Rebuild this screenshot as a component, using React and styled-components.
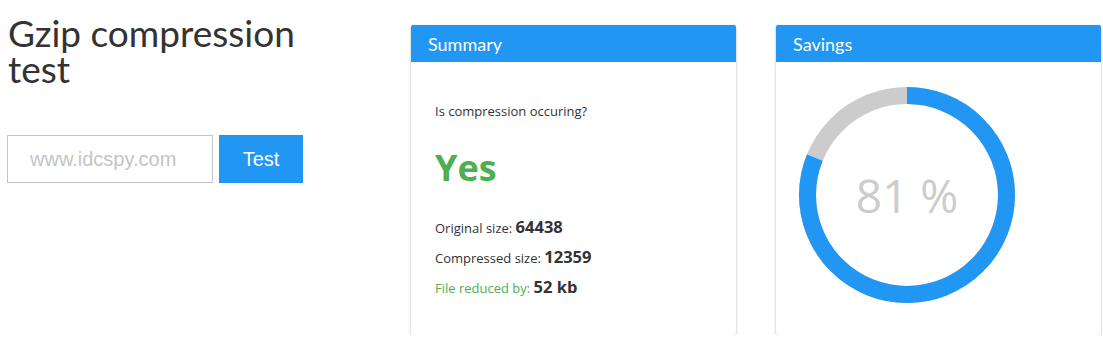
import styled, { createGlobalStyle } from 'styled-components'

const GlobalStyle = createGlobalStyle`
body {
  margin: 0;
  background: #ffffff;
  font-family: "Open Sans", "Liberation Sans", sans-serif;
  color: #333333;
}
`

const Page = styled.div`
display: grid;
grid-template-columns: 364px 325px 325px;
column-gap: 40px;
padding: 25px 0 0 7px;
align-items: start;
`

const Intro = styled.div`
display: flex;
flex-direction: column;
`

const Heading = styled.h1`
max-width: 320px;
margin: -10px 0 0 1px;
font-family: Lato, "Liberation Sans", sans-serif;
font-weight: 400;
font-size: 37px;
line-height: 36px;
color: #333333;
`

const Form = styled.form`
display: flex;
gap: 6px;
margin-top: 48px;
`

const UrlInput = styled.input`
box-sizing: border-box;
width: 206px;
height: 48px;
padding: 0 22px;
border: 1px solid #c4c4c4;
border-radius: 0;
font-family: "Liberation Sans", Arial, sans-serif;
font-size: 20px;
color: #333333;
outline: none;
&::placeholder {
  color: #c4c4c4;
}
`

const TestButton = styled.button`
width: 84px;
height: 48px;
border: none;
background: #2196f3;
color: #ffffff;
font-family: "Liberation Sans", Arial, sans-serif;
font-size: 20px;
cursor: pointer;
`

const Card = styled.section`
height: 310px;
background: #ffffff;
border-radius: 2px;
box-shadow: 0 1px 3px rgba(0, 0, 0, 0.28);
overflow: hidden;
display: flex;
flex-direction: column;
`

const CardHeader = styled.header`
height: 37px;
padding-left: 17px;
display: flex;
align-items: center;
background: #2196f3;
color: #ffffff;
font-family: Lato, "Liberation Sans", sans-serif;
font-size: 18px;
`

const SummaryBody = styled.div`
padding: 40px 24px 0;
`

const Question = styled.p`
margin: 0;
font-size: 13px;
line-height: 18px;
color: #333333;
`

const Answer = styled.div`
margin: 23px 0 20px;
font-size: 36px;
font-weight: 700;
line-height: 50px;
color: #4caf50;
`

const StatRow = styled.div`
height: 30px;
font-size: 13px;
line-height: 30px;
color: ${p => (p.$highlight ? '#4caf50' : '#333333')};
`

const StatValue = styled.strong`
font-size: 16.5px;
font-weight: 700;
line-height: 1;
color: #333333;
`

const SavingsBody = styled.div`
padding: 25px 24px 0 23px;
`

const Gauge = styled.div`
display: grid;
width: 216px;
height: 216px;
& > * {
  grid-area: 1 / 1;
}
`

const GaugeLabel = styled.div`
place-self: center;
font-size: 46px;
font-weight: 400;
color: #cccccc;
line-height: 1;
`

const Donut = ({ percent }) => {
  const r = 99.5
  const c = 2 * Math.PI * r
  return (
    <svg width="216" height="216" viewBox="0 0 216 216">
      <circle cx="108" cy="108" r={r} fill="none" stroke="#cccccc" strokeWidth="17" />
      <circle
        cx="108"
        cy="108"
        r={r}
        fill="none"
        stroke="#2196f3"
        strokeWidth="17"
        strokeDasharray={`${(c * percent) / 100} ${c}`}
        transform="rotate(-90 108 108)"
      />
    </svg>
  )
}

const App = () => {
  const savings = 81
  return (
    <>
      <GlobalStyle />
      <Page>
        <Intro>
          <Heading>Gzip compression test</Heading>
          <Form onSubmit={e => e.preventDefault()}>
            <UrlInput placeholder="www.idcspy.com" />
            <TestButton type="submit">Test</TestButton>
          </Form>
        </Intro>
        <Card>
          <CardHeader>Summary</CardHeader>
          <SummaryBody>
            <Question>Is compression occuring?</Question>
            <Answer>Yes</Answer>
            <StatRow>Original size: <StatValue>64438</StatValue></StatRow>
            <StatRow>Compressed size: <StatValue>12359</StatValue></StatRow>
            <StatRow $highlight>File reduced by: <StatValue>52 kb</StatValue></StatRow>
          </SummaryBody>
        </Card>
        <Card>
          <CardHeader>Savings</CardHeader>
          <SavingsBody>
            <Gauge>
              <Donut percent={savings} />
              <GaugeLabel>{savings} %</GaugeLabel>
            </Gauge>
          </SavingsBody>
        </Card>
      </Page>
    </>
  )
}

export default App
